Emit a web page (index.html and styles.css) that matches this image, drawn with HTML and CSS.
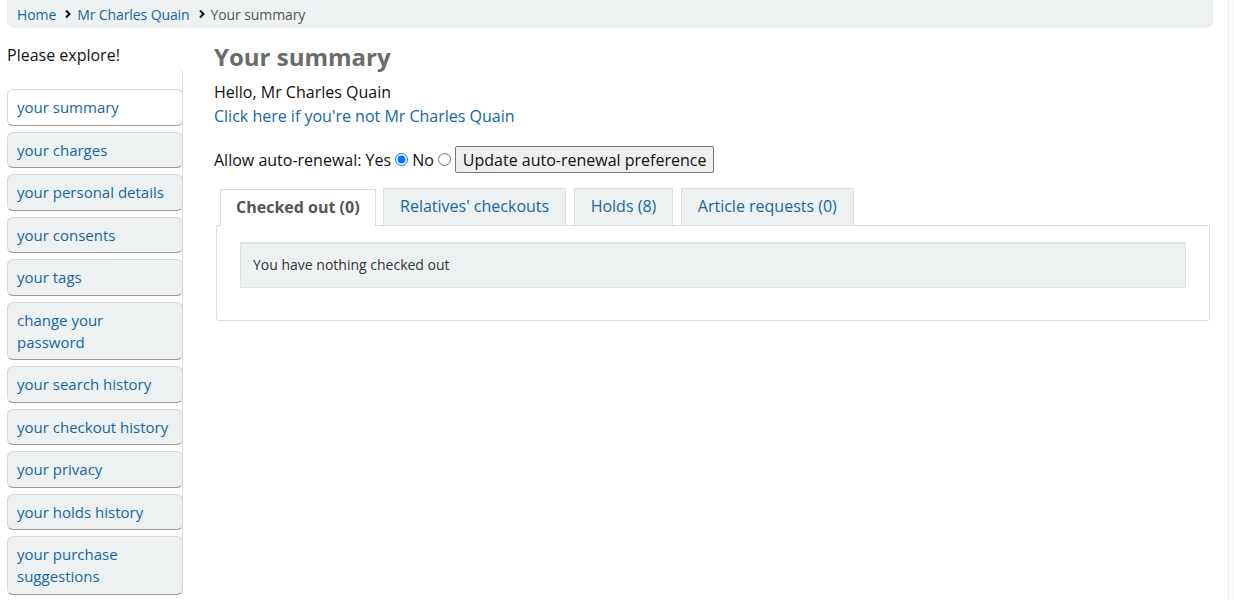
FILE: index.html
```html
<!DOCTYPE html>
<html lang="en">
<head>
    <meta charset="UTF-8">
    <title>Your summary</title>
    <link rel="stylesheet" href="styles.css">
</head>
<body>
<div class="page">
    <div class="wrap">
        <nav class="breadcrumb">
            <a href="#">Home</a>
            <span class="sep"><svg width="8" height="10" viewBox="0 0 8 10"><path d="M2 1.5 L5.5 5 L2 8.5" fill="none" stroke="#111" stroke-width="2"/></svg></span>
            <a href="#">Mr Charles Quain</a>
            <span class="sep"><svg width="8" height="10" viewBox="0 0 8 10"><path d="M2 1.5 L5.5 5 L2 8.5" fill="none" stroke="#111" stroke-width="2"/></svg></span>
            <span class="current">Your summary</span>
        </nav>

        <div class="layout">
            <aside class="sidebar">
                <div class="menu-title">Please explore!</div>
                <ul class="menu">
                    <li class="active"><a href="#">your summary</a></li>
                    <li><a href="#">your charges</a></li>
                    <li><a href="#">your personal details</a></li>
                    <li><a href="#">your consents</a></li>
                    <li><a href="#">your tags</a></li>
                    <li><a href="#">change your password</a></li>
                    <li><a href="#">your search history</a></li>
                    <li><a href="#">your checkout history</a></li>
                    <li><a href="#">your privacy</a></li>
                    <li><a href="#">your holds history</a></li>
                    <li><a href="#">your purchase suggestions</a></li>
                </ul>
            </aside>

            <main class="main">
                <h1>Your summary</h1>
                <p class="hello">Hello, Mr Charles Quain</p>
                <p class="notme"><a href="#">Click here if you're not Mr Charles Quain</a></p>

                <form class="autorenew">
                    <label>Allow auto-renewal: Yes <input type="radio" name="ar" checked></label>
                    <label>No <input type="radio" name="ar"></label>
                    <button type="button">Update auto-renewal preference</button>
                </form>

                <ul class="tabs">
                    <li class="active"><a href="#">Checked out (0)</a></li>
                    <li><a href="#">Relatives' checkouts</a></li>
                    <li><a href="#">Holds (8)</a></li>
                    <li><a href="#">Article requests (0)</a></li>
                </ul>
                <div class="tab-panel">
                    <div class="alert">You have nothing checked out</div>
                </div>
            </main>
        </div>
    </div>
    <div class="strip"></div>
</div>
</body>
</html>
```

FILE: styles.css
```css
body {
    margin: 0;
    font-family: "Open Sans", "Liberation Sans", sans-serif;
    color: #111;
    background: #fff;
}
a {
    color: #1467a3;
    text-decoration: none;
}
.page {
    display: flex;
    min-height: 600px;
}
.wrap {
    flex: 1;
    padding: 0 15px 0 7px;
}
.strip {
    width: 5px;
    border-left: 1px solid #ececec;
    background: #fafafa;
}

.breadcrumb {
    display: flex;
    align-items: center;
    height: 28px;
    padding: 0 10px;
    background: #eef1f2;
    border-radius: 0 0 7px 7px;
    font-size: 14px;
    letter-spacing: -0.1px;
}
.breadcrumb .sep {
    display: flex;
    align-items: center;
    margin: 0 5px 0 8px;
}
.breadcrumb .sep svg {
    display: block;
}
.breadcrumb .current {
    color: #555;
}

.layout {
    display: flex;
    gap: 31px;
    margin-top: 15px;
}

.sidebar {
    width: 176px;
    flex-shrink: 0;
}
.menu-title {
    font-size: 16px;
    line-height: 24px;
    margin-bottom: 1px;
}
.menu {
    list-style: none;
    margin: 0;
    padding: 21px 0 0 0;
    border-right: 1px solid #dcdcdc;
    border-top-right-radius: 6px;
}
.menu li {
    margin: 0 -1px 6px 0;
}
.menu li a {
    display: block;
    font-size: 15px;
    line-height: 22px;
    padding: 6px 9px 6.5px;
    background: #eef1f2;
    border: 1px solid #d6d8d9;
    border-bottom-color: #9a9a9a;
    border-radius: 6px;
}
.menu li.active a {
    background: #fff;
}

.main {
    flex: 1;
    min-width: 0;
}
.main h1 {
    margin: 0;
    font-size: 24px;
    line-height: 28px;
    font-weight: 700;
    color: #6b6b6b;
}
.hello,
.notme {
    margin: 0;
    font-size: 16px;
    line-height: 24px;
}
.hello {
    margin-top: 9px;
}

.autorenew {
    display: flex;
    align-items: center;
    margin-top: 18px;
    font-size: 16px;
}
.autorenew label {
    display: flex;
    align-items: center;
}
.autorenew input {
    margin: 0 4px 0 4px;
    width: 13px;
    height: 13px;
}
.autorenew button {
    font-family: "Open Sans", "Liberation Sans", sans-serif;
    font-size: 16px;
    color: #111;
    height: 27px;
    padding: 0 7px;
    background: #efefef;
    border: 1px solid #767676;
    border-radius: 2px;
}

.tabs {
    display: flex;
    gap: 7.5px;
    list-style: none;
    margin: 15px 0 0 0;
    padding: 0 0 0 6px;
}
.tabs li a {
    display: block;
    font-size: 16px;
    line-height: 24px;
    padding: 5px 16px 7px;
    background: #eef1f2;
    border: 1px solid #dcdcdc;
    border-bottom: none;
}
.tabs li.active a {
    background: #fff;
    color: #555;
    font-weight: 700;
    padding: 5px 15px 7px;
    position: relative;
    top: 1px;
}
.tab-panel {
    border: 1px solid #dcdcdc;
    border-radius: 0 0 3px 3px;
    margin: 0 3px 0 2px;
    padding: 16px 23px 32px;
}
.alert {
    background: #eef1f2;
    border: 1px solid #dfe3e5;
    border-top: 2px solid #dfe3e5;
    padding: 11px 12px 12px;
    font-size: 14px;
    line-height: 20px;
    color: #333;
}
```
